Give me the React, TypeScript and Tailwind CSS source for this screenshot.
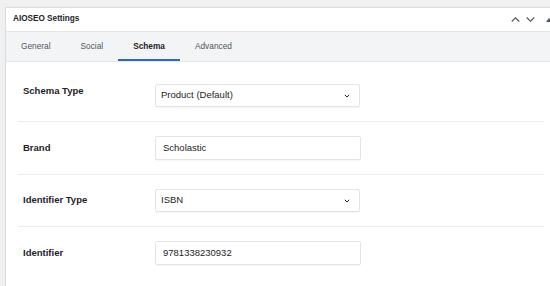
import React from 'react'

const font = { fontFamily: '"Liberation Sans", Arial, sans-serif' }

function Chevron({ up }: { up?: boolean }) {
  return (
    <svg width="9" height="5" viewBox="0 0 9 5" className="text-[#50575e]">
      <path
        d={up ? 'M0.7 4.5 L4.5 0.8 L8.3 4.5' : 'M0.7 0.5 L4.5 4.2 L8.3 0.5'}
        fill="none"
        stroke="currentColor"
        strokeWidth="1.1"
      />
    </svg>
  )
}

function SelectBox({ value }: { value: string }) {
  return (
    <div className="flex h-[23px] w-[205px] items-center justify-between rounded-[2px] border border-[#e2e4e7] bg-white pl-[5px] pr-[9px] shadow-[0_1px_1px_rgba(0,0,0,0.04)]">
      <span className="text-[9.5px] text-[#1d2327]">{value}</span>
      <svg width="6" height="4" viewBox="0 0 6 4">
        <path d="M0.8 0.8 L3 3 L5.2 0.8" fill="none" stroke="#1d2327" strokeWidth="1" />
      </svg>
    </div>
  )
}

function TextBox({ value }: { value: string }) {
  return (
    <div className="flex h-[24px] w-[206px] items-center rounded-[2px] border border-[#e2e4e7] bg-white pl-[7px] shadow-[0_1px_1px_rgba(0,0,0,0.04)]">
      <span className="text-[9.5px] text-[#1d2327]">{value}</span>
    </div>
  )
}

export default function App() {
  const tabs = ['General', 'Social', 'Schema', 'Advanced']

  return (
    <div className="h-[286px] w-[550px] overflow-hidden bg-[#f0f0f1] pl-[5px] pt-[7px]" style={font}>
      <div className="h-full w-[560px] border-l border-t border-[#dcdcde] bg-white">
        {/* Header */}
        <div className="flex h-[23px] items-center justify-between pl-[7px]">
          <span className="text-[8.2px] font-bold text-[#1d2327]">AIOSEO Settings</span>
          <div className="flex items-center gap-[6px] pr-[13px]">
            <Chevron up />
            <Chevron />
            <svg width="6" height="4" viewBox="0 0 6 4" className="ml-[5px]">
              <path d="M0 4 L3 0 L6 4 Z" fill="#50575e" />
            </svg>
          </div>
        </div>

        {/* Tabs */}
        <div className="flex h-[31px] border-y border-[#e5e6e8] bg-[#f3f4f5]">
          {tabs.map((tab) => (
            <div
              key={tab}
              className={
                tab === 'Schema'
                  ? 'flex items-center border-b-[2px] border-[#2d6bb3] px-[15px] pt-[1px] text-[8.3px] font-bold text-[#1d2327]'
                  : 'flex items-center px-[15px] pb-[1px] text-[8.3px] text-[#50575e]'
              }
            >
              {tab}
            </div>
          ))}
        </div>

        {/* Fields */}
        <div className="ml-[12px] w-[526px]">
          <div className="flex items-start pb-[14px] pl-[5px] pt-[22px]">
            <span className="w-[132px] pt-[1px] text-[9.5px] font-bold leading-[12px] text-[#1d2327]">Schema Type</span>
            <SelectBox value="Product (Default)" />
          </div>
          <div className="flex items-center border-t border-[#ededed] py-[14px] pl-[5px]">
            <span className="w-[132px] text-[9.5px] font-bold text-[#1d2327]">Brand</span>
            <TextBox value="Scholastic" />
          </div>
          <div className="flex items-center border-t border-[#ededed] py-[14px] pl-[5px]">
            <span className="w-[132px] text-[9.5px] font-bold text-[#1d2327]">Identifier Type</span>
            <SelectBox value="ISBN" />
          </div>
          <div className="flex items-center border-t border-[#ededed] py-[14px] pl-[5px]">
            <span className="w-[132px] text-[9.5px] font-bold text-[#1d2327]">Identifier</span>
            <TextBox value="9781338230932" />
          </div>
        </div>
      </div>
    </div>
  )
}
